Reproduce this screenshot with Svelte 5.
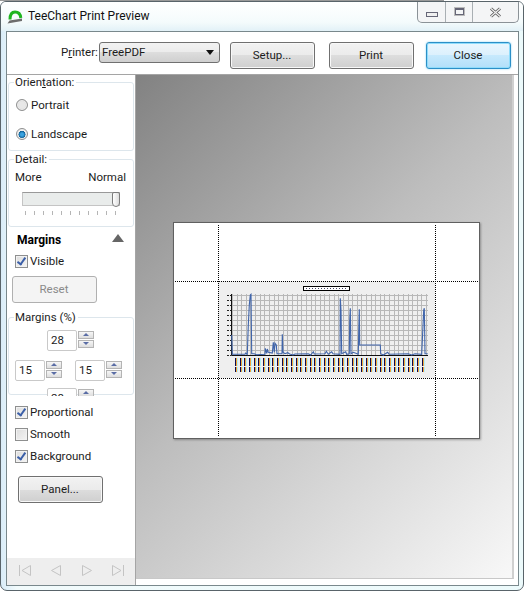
<script>
  // series traced from the preview, x/y in thirds of a pixel relative to the page corner
  const raw = [[50,180],[52,238],[90,238],[92,234],[97,238],[100,150],[103,90],[106,60],[108,58],[110,236],[118,236],[124,239],[150,238],[151,220],[155,235],[157,222],[160,232],[172,234],[175,202],[178,232],[180,205],[184,210],[186,236],[201,236],[202,178],[204,232],[210,236],[218,233],[224,237],[234,240],[240,237],[280,236],[287,240],[295,230],[298,237],[330,236],[334,229],[340,238],[350,230],[354,236],[375,238],[376,70],[378,105],[380,236],[392,230],[395,238],[403,236],[404,138],[406,100],[408,236],[415,232],[430,238],[431,172],[433,103],[434,210],[496,210],[497,236],[505,240],[518,232],[522,238],[580,236],[590,240],[600,236],[620,238],[626,105],[628,100],[630,236],[638,236]];
  const series = raw.map(([x, y]) => `${(x / 3 + 41).toFixed(1)},${(y / 3 + 52).toFixed(1)}`).join(' ');

  const vgrid = Array.from({ length: 43 }, (_, i) => Math.round(58 + i * 4.62) + 0.5);
  const hgrid = Array.from({ length: 13 }, (_, i) => 72.5 + i * 5);
  const yticks = Array.from({ length: 13 }, (_, i) => 72.5 + i * 5);
  const labels = Array.from({ length: 41 }, (_, i) => Math.round(61 + i * 4.67));

  const blobs = [
    { cls: 'b1' }, { cls: 'b2' }, { cls: 'b3' }
  ];
</script>

<div class="screen">
  <div class="desk"></div>
  <div class="window">
    {#each blobs as b}
      <span class="blob {b.cls}"></span>
    {/each}

    <header class="titlebar">
      <svg class="appicon" width="16" height="14" viewBox="0 0 16 14">
        <path d="M3 9.500 C3 4 5.500 2 8 2 C11.500 2 13.500 4.500 13.800 8" fill="none" stroke="#1fb51f" stroke-width="3"/>
        <path d="M0.500 13.500 L15 11 L15 8.500 L2.500 10.500 Z" fill="#6d6d6d"/>
      </svg>
      <span class="title">TeeChart Print Preview</span>
      <div class="controls">
        <div class="ctl min"><i></i></div>
        <div class="ctl max"><i></i></div>
        <div class="ctl close">
          <svg width="13" height="11" viewBox="0 0 13 11"><path d="M2 1.500 L11 9.500 M11 1.500 L2 9.500" stroke="#555" stroke-width="3"/><path d="M2 1.500 L11 9.500 M11 1.500 L2 9.500" stroke="#eee" stroke-width="1.400"/></svg>
        </div>
      </div>
    </header>

    <div class="client">
      <div class="toolbar">
        <span class="plabel">P<u>r</u>inter:</span>
        <div class="select">FreePDF<span class="caret"></span></div>
        <button class="btn setup">Setup...</button>
        <button class="btn print">Print</button>
        <button class="btn closebtn">Close</button>
      </div>

      <div class="body">
        <aside class="panel">
          <fieldset class="orient">
            <legend>Orien<u>t</u>ation:</legend>
            <div class="radio"><span class="dot"></span>Portrait</div>
            <div class="radio"><span class="dot on"></span>Landscape</div>
          </fieldset>

          <fieldset class="detail">
            <legend>Detail:</legend>
            <div class="ends"><span>More</span><span>Normal</span></div>
            <div class="track"><span class="thumb"></span></div>
            <div class="ticks">
              {#each Array(11) as _}<i></i>{/each}
            </div>
          </fieldset>

          <div class="mhead"><b>Margins</b><span class="tri"></span></div>
          <div class="check first"><span class="box on"></span>Visible</div>
          <button class="btn reset" disabled>Reset</button>

          <fieldset class="margins">
            <legend>Margins (%)</legend>
            <div class="spins">
              <div class="srow mid">
                <div class="spin"><span class="val">28</span><span class="arrows"><i class="up"></i><i class="down"></i></span></div>
              </div>
              <div class="srow split">
                <div class="spin"><span class="val">15</span><span class="arrows"><i class="up"></i><i class="down"></i></span></div>
                <div class="spin"><span class="val">15</span><span class="arrows"><i class="up"></i><i class="down"></i></span></div>
              </div>
              <div class="srow mid">
                <div class="spin"><span class="val">28</span><span class="arrows"><i class="up"></i><i class="down"></i></span></div>
              </div>
            </div>
          </fieldset>

          <div class="check"><span class="box on"></span>Proportional</div>
          <div class="check"><span class="box"></span>Smooth</div>
          <div class="check"><span class="box on"></span>Background</div>
          <button class="btn panelbtn">Panel...</button>

          <nav class="pager">
            <svg width="14" height="13" viewBox="0 0 14 13"><path d="M1.500 1 V12 M12.500 1.500 L4 6.500 L12.500 11.500 Z" fill="none" stroke="#c4c4c4"/></svg>
            <svg width="12" height="13" viewBox="0 0 12 13"><path d="M10.500 1.500 L1.500 6.500 L10.500 11.500 Z" fill="none" stroke="#c4c4c4"/></svg>
            <svg width="12" height="13" viewBox="0 0 12 13"><path d="M1.500 1.500 L10.500 6.500 L1.500 11.500 Z" fill="none" stroke="#c4c4c4"/></svg>
            <svg width="14" height="13" viewBox="0 0 14 13"><path d="M12.500 1 V12 M1.500 1.500 L10 6.500 L1.500 11.500 Z" fill="none" stroke="#c4c4c4"/></svg>
          </nav>
        </aside>

        <main class="canvas">
          <div class="paper">
            <svg width="305" height="215" viewBox="0 0 305 215">
              <rect x="44" y="58" width="217" height="97" fill="#efefef"/>
              <rect x="129.500" y="63.500" width="46" height="4" fill="#fff" stroke="#000"/>
              <path d="M132 65.500 H174" stroke="#446" stroke-dasharray="1 2"/>
              <g stroke="#b8b8b8" stroke-width="1">
                {#each vgrid as x}<line x1={x} x2={x} y1="71" y2="132"/>{/each}
                {#each hgrid as y}<line x1="58" x2="254" y1={y} y2={y}/>{/each}
              </g>
              <path d="M57.500 71 V132.500 H254" fill="none" stroke="#111"/>
              {#each yticks as y}
                <line x1="53" x2="57" y1={y} y2={y} stroke="#222" stroke-dasharray="2 1"/>
              {/each}
              {#each labels as x}
                <g>
                  <rect x={x + 2} y="135" width="1" height="14" fill="#aef0fa"/>
                  <rect x={x + 1} y="135" width="1" height="14" fill="#f2a33a"/>
                  <rect x={x} y="135" width="1" height="14" fill="#0c0c50"/>
                  <rect x={x} y="143" width="3" height="1" fill="#efefef"/>
                </g>
              {/each}
              <polyline points={series} fill="none" stroke="#4065ab" stroke-width="1.100"/>
              <g stroke="#000" stroke-dasharray="1 1">
                <line x1="44.500" x2="44.500" y1="2" y2="213"/>
                <line x1="261.500" x2="261.500" y1="2" y2="213"/>
                <line x1="1" x2="304" y1="58.500" y2="58.500"/>
                <line x1="1" x2="304" y1="155.500" y2="155.500"/>
              </g>
            </svg>
          </div>
        </main>
      </div>
    </div>
  </div>
</div>

<style>
  :global(body) { background: #fff; }

  .screen {
    width: 528px;
    height: 593px;
    position: relative;
    overflow: hidden;
    background: #fff;
    font-family: Roboto, "Liberation Sans", sans-serif;
    font-size: 11.5px;
    color: #1c1c1c;
  }
  .desk {
    height: 1px;
    background: linear-gradient(90deg, #999 0 84%, #fff 84%);
  }
  .window {
    position: relative;
    box-sizing: border-box;
    width: 524px;
    height: 590px;
    border: 1px solid #59646a;
    border-radius: 6px 6px 7px 7px;
    background: linear-gradient(90deg, #d9ecf8 0, #f2fbfc 3%, #ecfafb 100%);
    display: flex;
    flex-direction: column;
    overflow: hidden;
  }
  .blob {
    position: absolute;
    top: 10px;
    height: 9px;
    filter: blur(3px);
    border-radius: 4px;
    background: #f5c8e6;
  }
  .b1 { left: 155px; width: 100px; }
  .b2 { left: 297px; width: 40px; background: #f3cfe8; }
  .b3 { left: 362px; width: 40px; background: #f5d4ea; }

  .titlebar {
    position: relative;
    height: 29px;
    flex: none;
    display: flex;
    align-items: flex-start;
    background: linear-gradient(180deg, #fff 0, #f4fbfc 70%, #e2f1f7 100%);
  }
  .appicon { margin: 8px 0 0 6px; }
  .title {
    margin: 7px 0 0 5px;
    font-size: 12px;
    color: #111;
  }
  .controls {
    margin-left: auto;
    margin-right: 4px;
    display: flex;
    height: 20px;
    border: 1px solid #8b9297;
    border-top: 0;
    border-radius: 0 0 5px 5px;
    background: #f4f5f6;
  }
  .ctl {
    display: flex;
    align-items: center;
    justify-content: center;
    border-left: 1px solid #a9afb3;
  }
  .ctl:first-child { border-left: 0; }
  .min { width: 27px; }
  .max { width: 26px; }
  .close { width: 45px; }
  .min i {
    width: 10px;
    height: 3px;
    margin-top: 4px;
    border: 1px solid #667;
    background: #f0f0f0;
  }
  .max i {
    width: 7px;
    height: 4px;
    border: 1px solid #667;
    border-top-width: 2px;
    outline: 1px solid #bbb;
    margin-top: -2px;
  }

  .client {
    flex: 1;
    min-height: 0;
    margin: 0 4px 4px 5px;
    border: 1px solid #79888c;
    background: #fff;
    display: flex;
    flex-direction: column;
  }
  .toolbar {
    flex: none;
    height: 43px;
    box-sizing: border-box;
    border-bottom: 1px solid #a5a5a5;
    display: flex;
    align-items: flex-start;
    padding: 10px 0 0 54px;
  }
  .plabel { margin: 3px 3px 0 0; width: 35px; white-space: nowrap; }
  .select {
    box-sizing: border-box;
    width: 121px;
    height: 21px;
    line-height: 19px;
    padding-left: 2px;
    position: relative;
    border: 1px solid #707070;
    border-radius: 3px;
    background: linear-gradient(180deg, #f2f2f2 0, #ebebeb 50%, #ddd 50%, #cfcfcf 100%);
  }
  .caret {
    position: absolute;
    right: 5px;
    top: 7px;
    border: 4px solid transparent;
    border-top: 5px solid #111;
    border-bottom: 0;
  }
  .btn {
    box-sizing: border-box;
    width: 85px;
    height: 27px;
    padding: 0 1px 1px 0;
    font: inherit;
    color: inherit;
    border: 1px solid #707070;
    border-radius: 3px;
    background: linear-gradient(180deg, #f2f2f2 0, #ebebeb 50%, #ddd 50%, #cfcfcf 100%);
    box-shadow: inset 0 0 0 1px #f8f8f8;
  }
  .setup { margin-left: 10px; }
  .print { margin-left: 14px; }
  .closebtn {
    margin-left: 12px;
    border-color: #2b8fc7;
    background: linear-gradient(180deg, #e9f6fe 0, #dbf0fd 50%, #c6e9fd 50%, #b2dff9 100%);
    box-shadow: inset 0 0 0 1px #8fdcfb, 0 0 2px #7fcdf0;
  }

  .body { flex: 1; min-height: 0; display: flex; }

  .panel {
    width: 129px;
    flex: none;
    box-sizing: border-box;
    border-right: 1px solid #a5a5a5;
    display: flex;
    flex-direction: column;
    position: relative;
  }
  fieldset {
    margin: 0 0 0 1px;
    padding: 0;
    width: 126px;
    box-sizing: border-box;
    border: 1px solid #dde6ec;
    border-radius: 3px;
    min-width: 0;
  }
  legend { margin-left: -2px; padding: 0 2px 0 1px; line-height: 14px; }
  .orient { height: 76px; margin-top: 0; padding: 8px 0 0 7px; }
  .radio {
    display: flex;
    align-items: center;
    gap: 3px;
    height: 16px;
    margin-bottom: 13px;
  }
  .dot {
    box-sizing: border-box;
    width: 12px;
    height: 12px;
    border-radius: 50%;
    border: 1px solid #8e8f8f;
    background: radial-gradient(circle, #e8e8e8 0 45%, #c2c2c2 100%);
    box-shadow: inset 0 0 0 1px #eee;
  }
  .dot.on {
    background: radial-gradient(circle at 50% 55%, #3aa3e0 0 20%, #0d5f96 45%, #eee 50%);
  }

  .detail { height: 75px; margin-top: 1px; padding: 4px 7px 0 6px; }
  .detail legend { margin-left: -1px; }
  .ends { display: flex; justify-content: space-between; height: 15px; }
  .track {
    position: relative;
    width: 98px;
    height: 14px;
    margin: 7px 0 0 7px;
    box-sizing: border-box;
    border: 1px solid #c4c4c4;
    border-top-color: #999;
    background: #e9eceb;
  }
  .thumb {
    position: absolute;
    right: -1px;
    top: -1px;
    box-sizing: border-box;
    width: 8px;
    height: 15px;
    border: 1px solid #7c7c7c;
    border-radius: 2px 2px 4px 4px;
    background: linear-gradient(90deg, #fff, #ddd);
  }
  .ticks {
    display: flex;
    justify-content: space-between;
    width: 91px;
    margin: 5px 0 0 10px;
  }
  .ticks i { width: 1px; height: 4px; background: #b5b5b5; }

  .mhead {
    display: flex;
    justify-content: space-between;
    align-items: center;
    height: 16px;
    margin: 5px 11px 0 10px;
  }
  .mhead b { color: #000; font-size: 12px; }
  .tri {
    border: 6px solid transparent;
    border-bottom: 8px solid #666;
    border-top: 0;
    margin-bottom: 4px;
  }
  .check {
    display: flex;
    align-items: center;
    gap: 2px;
    height: 14px;
    margin: 8px 0 0 8px;
    white-space: nowrap;
  }
  .check.first { margin-top: 6px; }
  .box {
    position: relative;
    box-sizing: border-box;
    width: 13px;
    height: 13px;
    border: 1px solid #8e8f8f;
    background: linear-gradient(135deg, #ddd, #f4f4f4);
    box-shadow: inset 0 0 0 1px #f2f2f2;
  }
  .box.on::after {
    content: "";
    position: absolute;
    left: 3px;
    top: 0;
    width: 3px;
    height: 7px;
    border: solid #3b5fa8;
    border-width: 0 2px 2px 0;
    transform: rotate(35deg);
  }
  .reset {
    margin: 8px 0 0 5px;
    color: #8a8a8a;
    background: #f4f4f4;
    border-color: #b0b0b0;
    box-shadow: none;
  }

  .margins { height: 85px; margin-top: 7px; padding: 6px 0 0 6px; }
  .margins legend { margin-left: -1px; }
  .spins { height: 66px; overflow: hidden; }
  .srow { display: flex; margin-bottom: 9px; }
  .srow.mid { padding-left: 32px; }
  .srow.split { gap: 13px; margin-bottom: 7px; }
  .spin { display: flex; gap: 1px; }
  .val {
    box-sizing: border-box;
    width: 30px;
    height: 21px;
    line-height: 19px;
    padding-left: 3px;
    border: 1px solid #c9c9c9;
    border-radius: 2px;
    background: #fff;
  }
  .arrows { display: flex; flex-direction: column; gap: 1px; padding-top: 1px; }
  .arrows i {
    position: relative;
    display: block;
    box-sizing: border-box;
    width: 16px;
    height: 8px;
    border: 1px solid #b4b4b4;
    background: linear-gradient(180deg, #f6f6f6, #dedede);
  }
  .arrows i::after {
    content: "";
    position: absolute;
    left: 4px;
    top: 1px;
    border: 3px solid transparent;
  }
  .arrows .up::after { border-bottom: 3px solid #5a6da5; border-top: 0; }
  .arrows .down::after { border-top: 3px solid #5a6da5; border-bottom: 0; }

  .margins + .check { margin-top: 10px; }
  .panelbtn { margin: 13px 0 0 11px; flex: none; }

  .pager {
    margin-top: auto;
    height: 27px;
    flex: none;
    background: #eee;
    display: flex;
    align-items: center;
    justify-content: space-between;
    padding: 0 10px 2px 11px;
    box-sizing: border-box;
  }

  .canvas {
    flex: 1;
    min-width: 0;
    margin-bottom: 6px;
    margin-right: 4px;
    border-right: 2px solid #d0d0d0;
    border-bottom: 1px solid #c8c8c8;
    background: linear-gradient(135deg, #828282 0, #bdbdbd 45%, #f8f8f8 100%);
    padding: 147px 0 0 37px;
    box-sizing: border-box;
  }
  .paper {
    width: 305px;
    height: 215px;
    background: #fff;
    border: 1px solid #606060;
    box-shadow: 1px 1px 2px rgba(0, 0, 0, .3);
  }
  .paper svg { display: block; }
</style>
